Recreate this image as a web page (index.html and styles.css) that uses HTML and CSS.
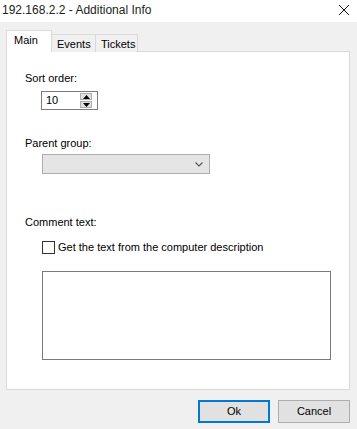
FILE: index.html
```html
<!DOCTYPE html>
<html>
<head>
<meta charset="utf-8">
<link rel="stylesheet" href="styles.css">
</head>
<body>
<div class="window">
  <div class="titlebar">
    <span class="title">192.168.2.2 - Additional Info</span>
    <svg class="close" width="12" height="12" viewBox="0 0 12 12"><path d="M1 1L11 11M11 1L1 11" stroke="#111" stroke-width="1"/></svg>
  </div>
  <div class="body">
    <div class="tabs">
      <div class="tab active">Main</div>
      <div class="tab t-events">Events</div>
      <div class="tab t-tickets">Tickets</div>
    </div>
    <div class="panel">
      <div class="label">Sort order:</div>
      <div class="spin">
        <span class="spin-val">10</span>
        <div class="spin-btns">
          <div class="sbtn"><svg width="7" height="4" viewBox="0 0 9 5"><path d="M4.5 0L9 5H0z" fill="#000"/></svg></div>
          <div class="sbtn"><svg width="7" height="4" viewBox="0 0 9 5"><path d="M0 0H9L4.5 5z" fill="#000"/></svg></div>
        </div>
      </div>
      <div class="label l-parent">Parent group:</div>
      <div class="combo">
        <svg class="chev" width="8" height="5" viewBox="0 0 8 5"><path d="M0.5 0.5L4 4L7.5 0.5" stroke="#555" stroke-width="1.1" fill="none"/></svg>
      </div>
      <div class="label l-comment">Comment text:</div>
      <div class="check-row">
        <span class="checkbox"></span>
        <span class="check-label">Get the text from the computer description</span>
      </div>
      <div class="textarea"></div>
    </div>
    <div class="buttons">
      <div class="btn default">Ok</div>
      <div class="btn">Cancel</div>
    </div>
  </div>
</div>
</body>
</html>
```
FILE: styles.css
```css
html, body {
  margin: 0;
  padding: 0;
  width: 357px;
  height: 429px;
  overflow: hidden;
  background: #f0f0f0;
  font-family: "Liberation Sans", Arial, sans-serif;
  font-size: 11px;
  color: #000;
}
.window {
  width: 357px;
  height: 429px;
  display: flex;
  flex-direction: column;
}
.titlebar {
  height: 22px;
  background: #fff;
  display: flex;
  align-items: center;
  justify-content: space-between;
  padding: 0 7px 0 2px;
}
.title {
  font-size: 12px;
  color: #222;
  margin-top: -2px;
}
.close { margin-top: -2px; }
.body {
  flex: 1;
  display: flex;
  flex-direction: column;
  padding: 9px 7px 0 6px;
}
.tabs {
  display: flex;
  align-items: flex-end;
  height: 21px;
  position: relative;
  z-index: 2;
  margin-bottom: -1px;
}
.tab {
  height: 18px;
  border: 1px solid #d9d9d9;
  border-bottom: none;
  background: #f0f0f0;
  line-height: 18px;
  box-sizing: border-box;
  margin-left: -1px;
}
.tab.active {
  margin-left: 0;
  height: 22px;
  background: #fff;
  width: 46px;
  padding-left: 7px;
  line-height: 19px;
}
.t-events { width: 45px; padding-left: 5px; }
.t-tickets { width: 43px; padding-left: 5px; }
.panel {
  height: 339px;
  box-sizing: border-box;
  border: 1px solid #d9d9d9;
  background: #fff;
  padding: 20px 0 0 18px;
  display: flex;
  flex-direction: column;
  align-items: flex-start;
}
.label { line-height: 13px; }
.spin {
  margin: 6px 0 0 16px;
  width: 57px;
  height: 19px;
  box-sizing: border-box;
  border: 1px solid #7a7a7a;
  display: flex;
  align-items: center;
  justify-content: space-between;
  padding: 0 5px 0 4px;
}
.spin-val { line-height: 13px; }
.spin-btns {
  display: flex;
  flex-direction: column;
  gap: 1px;
}
.sbtn {
  width: 12px;
  height: 7px;
  background: #e1e1e1;
  border: 1px solid #adadad;
  box-sizing: border-box;
  display: flex;
  align-items: center;
  justify-content: center;
}
.l-parent { margin-top: 27px; }
.combo {
  margin: 4px 0 0 17px;
  width: 168px;
  height: 20px;
  box-sizing: border-box;
  border: 1px solid #adadad;
  background: #e5e5e5;
  display: flex;
  align-items: center;
  justify-content: flex-end;
  padding-right: 6px;
}
.l-comment { margin-top: 42px; }
.check-row {
  margin: 12px 0 0 17px;
  display: flex;
  align-items: center;
}
.checkbox {
  width: 13px;
  height: 13px;
  box-sizing: border-box;
  border: 1px solid #333;
  background: #fff;
  margin-right: 3px;
}
.check-label { line-height: 13px; }
.textarea {
  margin: 17px 0 0 17px;
  width: 289px;
  height: 89px;
  box-sizing: border-box;
  border: 1px solid #7a7a7a;
  background: #fff;
}
.buttons {
  display: flex;
  justify-content: flex-end;
  gap: 8px;
  margin-top: 10px;
}
.btn {
  width: 72px;
  height: 23px;
  box-sizing: border-box;
  border: 1px solid #adadad;
  background: #e1e1e1;
  text-align: center;
  line-height: 21px;
}
.btn.default {
  border: 2px solid #0078d7;
  line-height: 19px;
}
```
